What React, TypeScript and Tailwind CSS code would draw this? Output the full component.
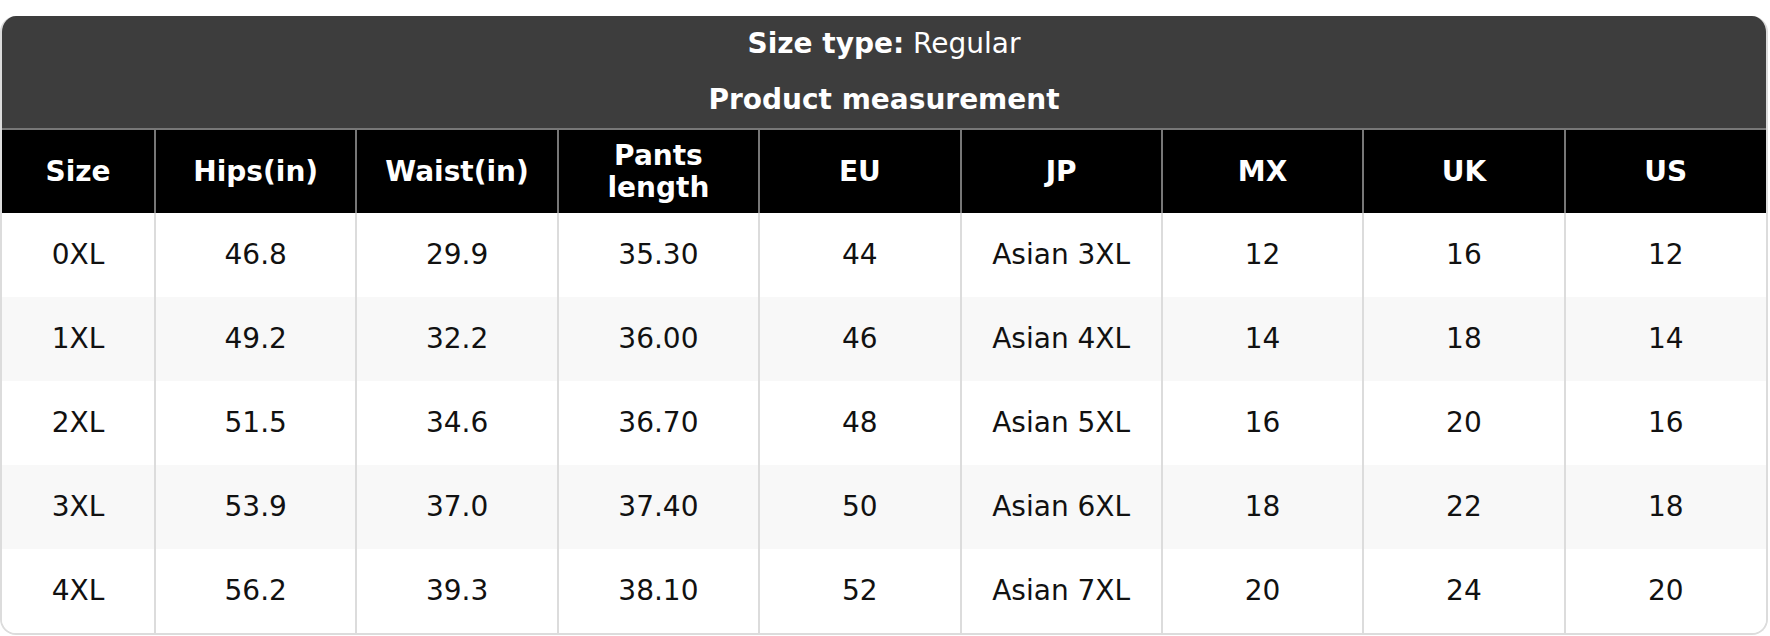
import React from "react";

const headers = ["Size", "Hips(in)", "Waist(in)", "Pants length", "EU", "JP", "MX", "UK", "US"];
const rows = [
  ["0XL", "46.8", "29.9", "35.30", "44", "Asian 3XL", "12", "16", "12"],
  ["1XL", "49.2", "32.2", "36.00", "46", "Asian 4XL", "14", "18", "14"],
  ["2XL", "51.5", "34.6", "36.70", "48", "Asian 5XL", "16", "20", "16"],
  ["3XL", "53.9", "37.0", "37.40", "50", "Asian 6XL", "18", "22", "18"],
  ["4XL", "56.2", "39.3", "38.10", "52", "Asian 7XL", "20", "24", "20"],
];

export default function App() {
  return (
    <div className="bg-white w-[1770px] h-[636px] pt-4" style={{ fontFamily: '"DejaVu Sans", sans-serif' }}>
      <div className="w-[1768px] rounded-[16px] overflow-hidden border-2 border-[#dcdcdc] border-t-0">
        <div className="bg-[#3d3d3d] text-white text-[28px] text-center h-[112px] flex flex-col">
          <div className="h-[56px] leading-[56px]">
            <span className="font-bold">Size type:</span> Regular
          </div>
          <div className="h-[56px] leading-[56px] font-bold">Product measurement</div>
        </div>
        <table className="w-full table-fixed border-collapse text-[28px]">
          <colgroup>
            <col className="w-[153px]" />
            {headers.slice(1).map((h) => (
              <col key={h} />
            ))}
          </colgroup>
          <thead>
            <tr className="bg-black text-white h-[84px] border-t-2 border-[#777]">
              {headers.map((h, i) => (
                <th
                  key={h}
                  className={`font-bold leading-[32px] text-center align-middle px-2 p-0 ${i > 0 ? "border-l-2 border-[#777]" : ""}`}
                >
                  {h === "Pants length" ? (
                    <>
                      Pants
                      <br />
                      length
                    </>
                  ) : (
                    h
                  )}
                </th>
              ))}
            </tr>
          </thead>
          <tbody>
            {rows.map((r, ri) => (
              <tr key={ri} className={`h-[84px] ${ri % 2 === 1 ? "bg-[#f8f8f8]" : "bg-white"}`}>
                {r.map((c, ci) => (
                  <td
                    key={ci}
                    className={`text-center align-middle text-[#111] p-0 leading-[36px] ${ci > 0 ? "border-l-2 border-[#dcdcdc]" : ""}`}
                  >
                    {c}
                  </td>
                ))}
              </tr>
            ))}
          </tbody>
        </table>
      </div>
    </div>
  );
}
